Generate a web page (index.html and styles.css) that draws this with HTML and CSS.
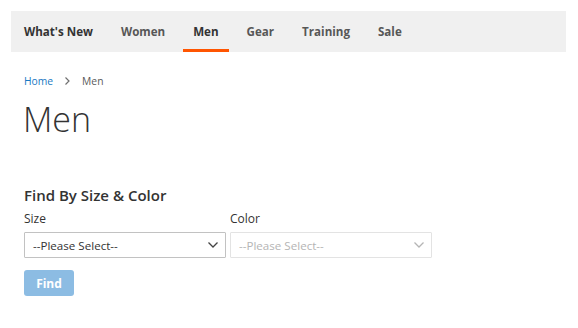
FILE: index.html
```html
<!DOCTYPE html>
<html>
<head>
<meta charset="utf-8">
<link rel="stylesheet" href="styles.css">
</head>
<body>
<nav class="nav">
  <a class="nav-item">What's New</a>
  <a class="nav-item">Women</a>
  <a class="nav-item active">Men</a>
  <a class="nav-item">Gear</a>
  <a class="nav-item">Training</a>
  <a class="nav-item">Sale</a>
</nav>
<main class="main">
  <div class="breadcrumbs">
    <a class="crumb-link">Home</a>
    <span class="crumb-sep"><svg width="7" height="10" viewBox="0 0 7 10"><path d="M1.5 1.5 L5 5 L1.5 8.5" fill="none" stroke="#707070" stroke-width="1.2"/></svg></span>
    <span class="crumb-current">Men</span>
  </div>
  <h1 class="title">Men</h1>
  <h2 class="finder-title">Find By Size &amp; Color</h2>
  <div class="fields">
    <div class="field">
      <label class="label">Size</label>
      <div class="select">
        <span>--Please Select--</span>
        <svg width="12" height="8" viewBox="0 0 12 8"><path d="M1.5 1.5 L6 6 L10.5 1.5" fill="none" stroke="#444" stroke-width="1.3"/></svg>
      </div>
    </div>
    <div class="field">
      <label class="label">Color</label>
      <div class="select disabled">
        <span>--Please Select--</span>
        <svg width="12" height="8" viewBox="0 0 12 8"><path d="M1.5 1.5 L6 6 L10.5 1.5" fill="none" stroke="#b5b5b5" stroke-width="1.3"/></svg>
      </div>
    </div>
  </div>
  <button class="btn">Find</button>
</main>
</body>
</html>
```
FILE: styles.css
```css
* { box-sizing: border-box; }
html, body { margin: 0; padding: 0; background: #fff; }
body {
  font-family: "Open Sans", "Liberation Sans", sans-serif;
  color: #333;
  padding: 11px 12px 0 11px;
}
.nav {
  display: flex;
  background: #f0f0f0;
  height: 41px;
  padding-left: 3px;
}
.nav-item {
  display: flex;
  align-items: center;
  padding: 2px 10px 0 10px;
  margin-right: 8px;
  font-size: 11.6px;
  font-weight: 700;
  color: #575757;
  border-bottom: 3px solid transparent;
}
.nav-item:first-child { color: #333; }
.nav-item.active { color: #333; border-bottom-color: #ff5501; }
.main { padding-left: 13px; }
.breadcrumbs {
  display: flex;
  align-items: center;
  font-size: 10.3px;
  margin-top: 22px;
  height: 14px;
}
.crumb-link { color: #1979c3; }
.crumb-sep { display: flex; margin: 0 11px 0 11px; }
.crumb-current { color: #5a5a5a; }
.title {
  font-size: 34px;
  font-weight: 300;
  margin: 5px 0 0 -1px;
  line-height: 52px;
  color: #333;
}
.finder-title {
  font-size: 15px;
  font-weight: 600;
  margin: 40px 0 0 0;
  line-height: 20px;
}
.fields { display: flex; gap: 4px; margin-top: 6px; }
.field { display: flex; flex-direction: column; width: 202px; }
.label { font-size: 12px; line-height: 16px; margin-bottom: 5px; }
.select {
  height: 26px;
  border: 1px solid #c2c2c2;
  border-radius: 1px;
  display: flex;
  align-items: center;
  justify-content: space-between;
  padding: 0 6px 0 8px;
  font-size: 11.6px;
  color: #333;
}
.select.disabled { border-color: #e3e3e3; color: #b5b5b5; }
.btn {
  margin-top: 12px;
  width: 50px;
  height: 26px;
  border: none;
  border-radius: 3px;
  background: #8cbce3;
  color: #fff;
  font-family: "Open Sans", sans-serif;
  font-weight: 700;
  font-size: 12px;
  padding: 0;
}
```
